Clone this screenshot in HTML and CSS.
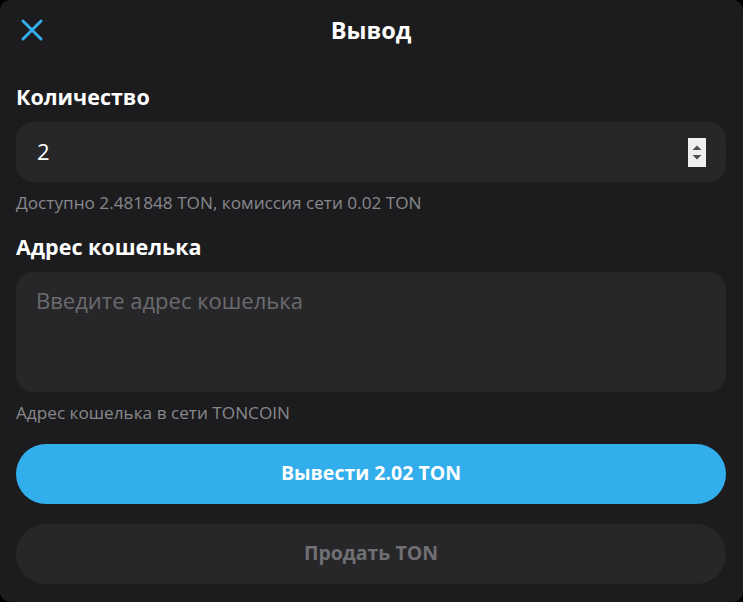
FILE: index.html
```html
<!DOCTYPE html>
<html lang="ru">
<head>
    <meta charset="UTF-8">
    <meta name="viewport" content="width=device-width, initial-scale=1.0">
    <title>Вывод</title>
    <link rel="stylesheet" href="styles.css">
</head>
<body>
    <div class="sheet">
        <header class="sheet-header">
            <button class="close-btn" type="button" aria-label="Закрыть">
                <svg width="24" height="24" viewBox="0 0 24 24">
                    <path d="M3 3 L21 21 M21 3 L3 21" stroke="#33aeec" stroke-width="3" stroke-linecap="round" fill="none"/>
                </svg>
            </button>
            <h1>Вывод</h1>
        </header>

        <form class="withdraw-form">
            <label class="field-label" for="amount">Количество</label>
            <div class="amount-box">
                <span class="amount-value">2</span>
                <span class="spinner">
                    <svg width="18" height="29" viewBox="0 0 18 29">
                        <rect width="18" height="29" fill="#f0f0f0"/>
                        <path d="M4.5 12 L9 7.5 L13.5 12 Z" fill="#505050"/>
                        <path d="M4.5 17 L13.5 17 L9 21.5 Z" fill="#505050"/>
                    </svg>
                </span>
            </div>
            <p class="hint">Доступно 2.481848 TON, комиссия сети 0.02 TON</p>

            <label class="field-label" for="address">Адрес кошелька</label>
            <div class="address-box">
                <span class="placeholder">Введите адрес кошелька</span>
            </div>
            <p class="hint">Адрес кошелька в сети TONCOIN</p>

            <button class="btn btn-primary" type="button">Вывести 2.02 TON</button>
            <button class="btn btn-secondary" type="button">Продать TON</button>
        </form>
    </div>
</body>
</html>
```

FILE: styles.css
```css
html, body {
    margin: 0;
    padding: 0;
    background: #000;
}

body {
    font-family: 'Open Sans', 'Noto Sans', sans-serif;
    color: #fff;
}

.sheet {
    background: #1c1c1e;
    border-radius: 10px;
    height: 602px;
    box-sizing: border-box;
    padding: 0 17px 0 16px;
}

.sheet-header {
    position: relative;
    height: 60px;
    display: flex;
    align-items: center;
    justify-content: center;
}

.close-btn {
    position: absolute;
    left: 4px;
    top: 18px;
    background: none;
    border: none;
    padding: 0;
    width: 24px;
    height: 24px;
    cursor: pointer;
}

.sheet-header h1 {
    margin: 0;
    font-size: 23.5px;
    font-weight: 700;
}

.withdraw-form {
    display: flex;
    flex-direction: column;
    padding-top: 22px;
}

.field-label {
    font-size: 21.5px;
    font-weight: 700;
    line-height: 30px;
    margin-bottom: 10px;
}

.amount-box {
    height: 60px;
    background: #27272a;
    border-radius: 18px;
    display: flex;
    align-items: center;
    justify-content: space-between;
    padding: 0 20px 2px 21px;
    box-sizing: border-box;
}

.amount-value {
    font-size: 22px;
}

.spinner {
    display: flex;
    margin-top: 2px;
}

.hint {
    margin: 11px 0 19px;
    font-size: 17.2px;
    line-height: 20px;
    color: #88888c;
}

.address-box {
    height: 120px;
    background: #27272a;
    border-radius: 18px;
    padding: 14px 20px;
    box-sizing: border-box;
}

.placeholder {
    font-size: 22px;
    line-height: 28px;
    color: #6b6b6f;
}

.btn {
    height: 60px;
    border: none;
    border-radius: 30px;
    padding: 0 0 3px;
    font-family: inherit;
    font-size: 19.5px;
    font-weight: 700;
    cursor: pointer;
}

.btn-primary {
    background: #33aeec;
    color: #fff;
    margin-top: 2px;
}

.btn-secondary {
    background: #27272a;
    color: #707074;
    margin-top: 20px;
}
```
